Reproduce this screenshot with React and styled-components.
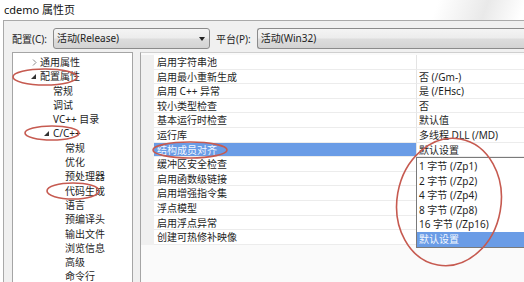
import React from "react";
import styled, { createGlobalStyle, css } from "styled-components";

const Global = createGlobalStyle`
    html, body {
        margin: 0;
        padding: 0;
        background: #ffffff;
        overflow: hidden;
    }
    body {
        font-family: "Noto Sans", "Noto Sans CJK SC", sans-serif;
        font-size: 10px;
        color: #1e1e1e;
    }
`;

const Window = styled.div`
    position: relative;
    width: 524px;
    height: 282px;
    display: flex;
    flex-direction: column;
    overflow: hidden;
    background: linear-gradient(110deg, #ffffff 0%, #ffffff 70%, #e9e9e9 78%, #ffffff 84%, #eeeeee 100%);
`;

const TitleBar = styled.div`
    height: 20px;
    padding-left: 4px;
    line-height: 20px;
    font-size: 11px;
    color: #111;
    flex-shrink: 0;
`;

const Body = styled.div`
    flex: 1;
    min-height: 0;
    margin-left: 3px;
    border-left: 1px solid #a9a9a9;
    border-top: 1px solid #a9a9a9;
    background: #f0f0f0;
    display: flex;
    flex-direction: column;
`;

const ConfigRow = styled.div`
    display: flex;
    align-items: center;
    height: 20px;
    margin-top: 7px;
    padding-left: 8px;
    flex-shrink: 0;
`;

const Label = styled.span`
    margin-left: ${(p) => p.lead || 0}px;
    margin-right: 6px;
    white-space: nowrap;
`;

const Combo = styled.div`
    position: relative;
    box-sizing: border-box;
    width: ${(p) => p.width}px;
    height: 21px;
    border: 1px solid #8b8b8b;
    border-radius: 3px;
    background: linear-gradient(#f4f4f4 0%, #ececec 48%, #dddddd 52%, #d3d3d3 100%);
    padding-left: 3px;
    line-height: 19px;
    flex-shrink: 0;
    ${(p) =>
        p.open &&
        css`
            border-right: none;
            border-radius: 3px 0 0 3px;
        `}
`;

const Arrow = styled.span`
    position: absolute;
    right: 4px;
    top: 8px;
    width: 0;
    height: 0;
    border-left: 3.5px solid transparent;
    border-right: 3.5px solid transparent;
    border-top: 4px solid #222;
`;

const Main = styled.div`
    flex: 1;
    min-height: 0;
    display: flex;
    margin-top: 4px;
    padding-left: 8px;
    gap: 7px;
`;

const Tree = styled.div`
    width: 119px;
    flex-shrink: 0;
    background: #fff;
    border: 1px solid #a5a5a5;
    border-bottom: none;
    padding-top: 2px;
    display: flex;
    flex-direction: column;
`;

const TreeItem = styled.div`
    flex-shrink: 0;
    height: 14.3px;
    line-height: 14.3px;
    padding-left: ${(p) => p.indent}px;
    position: relative;
    white-space: nowrap;
`;

const Expanded = styled.span`
    position: absolute;
    left: ${(p) => p.indent - 9}px;
    top: 5px;
    width: 0;
    height: 0;
    border-left: 5px solid transparent;
    border-bottom: 5px solid #333;
`;

const Collapsed = styled.svg`
    position: absolute;
    left: ${(p) => p.indent - 8}px;
    top: 4px;
`;

const Grid = styled.div`
    flex: 1;
    background: #fafafa;
    border-left: 1px solid #a5a5a5;
    border-top: 1px solid #cfcfcf;
    padding-top: 2px;
    display: flex;
    flex-direction: column;
    position: relative;
`;

const Row = styled.div`
    flex-shrink: 0;
    display: flex;
    height: 14.6px;
    line-height: 14px;
    background: #f0f0f0;
`;

const Gutter = styled.div`
    width: 13px;
    flex-shrink: 0;
`;

const NameCell = styled.div`
    width: 262px;
    box-sizing: border-box;
    flex-shrink: 0;
    padding-left: 3px;
    background: ${(p) => (p.selected ? "#6a9ce6" : "#fff")};
    color: ${(p) => (p.selected ? "#f4f8ff" : "#1e1e1e")};
    border-bottom: 1px solid #ececec;
    white-space: nowrap;
`;

const ValueCell = styled.div`
    flex: 1;
    box-sizing: border-box;
    padding-left: 2px;
    background: #fff;
    border-left: 1px solid #e4e4e4;
    border-bottom: 1px solid #ececec;
    white-space: nowrap;
`;

const Dropdown = styled.div`
    position: absolute;
    left: 275px;
    top: 104px;
    right: -4px;
    background: #fff;
    border: 1px solid #7a7a7a;
    padding-top: 1px;
    display: flex;
    flex-direction: column;
`;

const Option = styled.div`
    flex-shrink: 0;
    height: 14.6px;
    line-height: 14.6px;
    padding-left: 2px;
    white-space: nowrap;
    background: ${(p) => (p.selected ? "#6a9ce6" : "transparent")};
    color: ${(p) => (p.selected ? "#f4f8ff" : "#1e1e1e")};
`;

const Marks = styled.svg`
    position: absolute;
    left: 0;
    top: 0;
    pointer-events: none;
`;

const tree = [
    { text: "通用属性", indent: 27, state: "closed" },
    { text: "配置属性", indent: 27, state: "open" },
    { text: "常规", indent: 40 },
    { text: "调试", indent: 40 },
    { text: "VC++ 目录", indent: 40 },
    { text: "C/C++", indent: 40, state: "open" },
    { text: "常规", indent: 52 },
    { text: "优化", indent: 52 },
    { text: "预处理器", indent: 52 },
    { text: "代码生成", indent: 52 },
    { text: "语言", indent: 52 },
    { text: "预编译头", indent: 52 },
    { text: "输出文件", indent: 52 },
    { text: "浏览信息", indent: 52 },
    { text: "高级", indent: 52 },
    { text: "命令行", indent: 52 },
];

const props = [
    ["启用字符串池", ""],
    ["启用最小重新生成", "否 (/Gm-)"],
    ["启用 C++ 异常", "是 (/EHsc)"],
    ["较小类型检查", "否"],
    ["基本运行时检查", "默认值"],
    ["运行库", "多线程 DLL (/MD)"],
    ["结构成员对齐", "默认设置", true],
    ["缓冲区安全检查", ""],
    ["启用函数级链接", ""],
    ["启用增强指令集", ""],
    ["浮点模型", ""],
    ["启用浮点异常", ""],
    ["创建可热修补映像", ""],
];

const options = ["1 字节 (/Zp1)", "2 字节 (/Zp2)", "4 字节 (/Zp4)", "8 字节 (/Zp8)", "16 字节 (/Zp16)", "默认设置"];

export default function App() {
    return (
        <>
            <Global />
            <Window>
                <TitleBar>cdemo 属性页</TitleBar>
                <Body>
                    <ConfigRow>
                        <Label>配置(C):</Label>
                        <Combo width={157}>
                            活动(Release)
                            <Arrow />
                        </Combo>
                        <Label lead={6}>平台(P):</Label>
                        <Combo width={270} open>
                            活动(Win32)
                        </Combo>
                    </ConfigRow>
                    <Main>
                        <Tree>
                            {tree.map((t, i) => (
                                <TreeItem key={i} indent={t.indent}>
                                    {t.state === "open" && <Expanded indent={t.indent} />}
                                    {t.state === "closed" && (
                                        <Collapsed indent={t.indent} width="5" height="7" viewBox="0 0 5 7">
                                            <path d="M1 0.5 L4 3.5 L1 6.5" fill="none" stroke="#8a8a8a" strokeWidth="1" />
                                        </Collapsed>
                                    )}
                                    {t.text}
                                </TreeItem>
                            ))}
                        </Tree>
                        <Grid>
                            {props.map(([name, value, sel], i) => (
                                <Row key={i}>
                                    <Gutter />
                                    <NameCell selected={sel}>{name}</NameCell>
                                    <ValueCell>{value}</ValueCell>
                                </Row>
                            ))}
                            <Dropdown>
                                {options.map((o, i) => (
                                    <Option key={i} selected={i === options.length - 1}>
                                        {o}
                                    </Option>
                                ))}
                            </Dropdown>
                        </Grid>
                    </Main>
                </Body>
                <Marks width="524" height="282" viewBox="0 0 524 282">
                    <g fill="none" stroke="#c65a50" strokeWidth="1.6">
                        <ellipse cx="45" cy="77" rx="32" ry="8" />
                        <ellipse cx="52" cy="133" rx="27" ry="7" />
                        <ellipse cx="73" cy="191" rx="26" ry="8" />
                        <ellipse cx="190" cy="150" rx="37" ry="8" />
                        <ellipse cx="449" cy="202" rx="52" ry="64" transform="rotate(10 449 202)" />
                    </g>
                </Marks>
            </Window>
        </>
    );
}
